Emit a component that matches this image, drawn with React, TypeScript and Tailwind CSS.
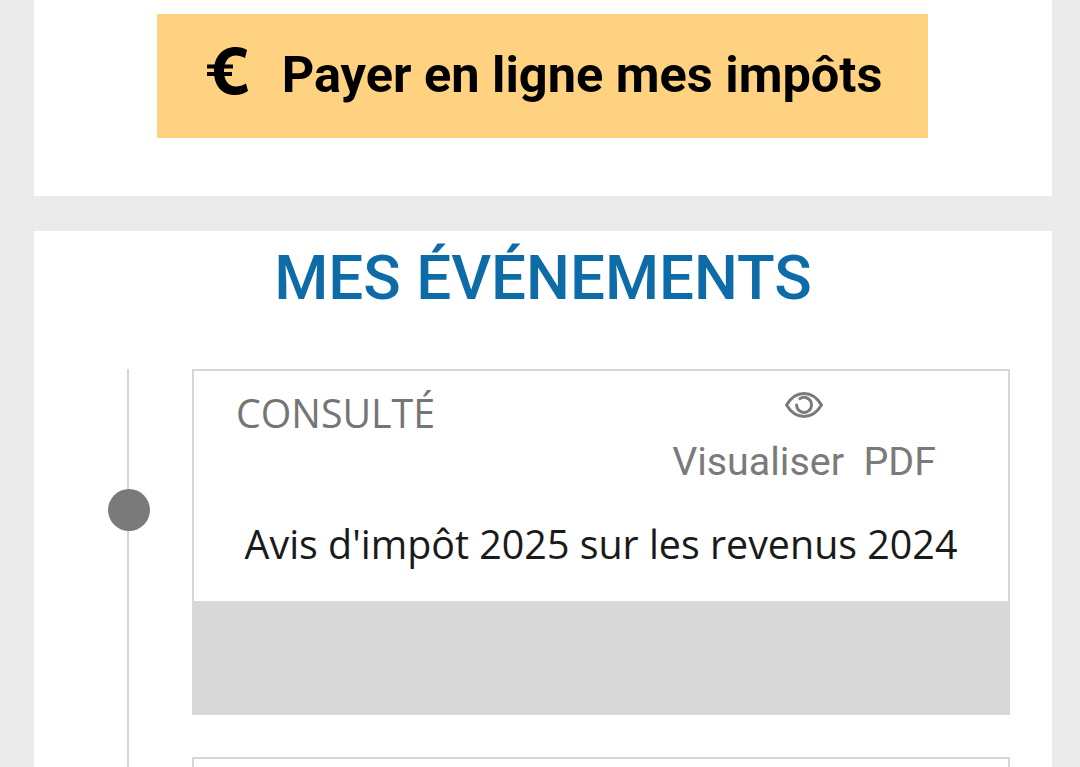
export default function App() {
  return (
    <div className="h-[767px] w-[1080px] overflow-hidden bg-[#ebebeb] pr-[28px] pl-[34px] font-['Roboto',sans-serif]">
      <section className="flex h-[196px] flex-col items-start bg-white pt-[14px] pl-[123px]">
        <a className="flex h-[124px] w-[771px] items-center justify-center gap-[33px] bg-[#fed280] pb-[2px] pl-[4px] text-black">
          <svg className="mb-[8px]" width="42" height="50" viewBox="0 -1 42 50" fill="currentColor">
            <path d="M40 3L38 11C35 9.500 32 8.500 29 8.500C21 8.500 17 15 17 24C17 33 21 39.500 29 39.500C32 39.500 36 38.500 39 36.500L41 44C37 46.500 33 48 28 48C14 48 7 38 7 24C7 10 15 0 29 0C33 0 37 1 40 3Z" />
            <path d="M0 17.500H26V21.500H0ZM0 25H25V29H0Z" />
          </svg>
          <span className="text-[50.5px] leading-none font-bold">Payer en ligne mes impôts</span>
        </a>
      </section>
      <section className="mt-[35px] bg-white pb-[40px]">
        <h2 className="pt-[11px] text-center text-[61.9px] leading-[72px] font-medium text-[#0d6ba8]">MES ÉVÉNEMENTS</h2>
        <div className="relative mt-[55px] ml-[93px] border-l-2 border-[#d6d6d6] pl-[63px]">
          <span className="absolute top-[120px] left-[-21px] h-[42px] w-[42px] rounded-full bg-[#7a7a7a]" />
          <article className="w-[818px] border-2 border-[#d6d6d6]">
            <div className="flex h-[230px] flex-col">
              <div className="flex justify-between pr-[72px] pl-[42px]">
                <span className="pt-[17px] font-['Open_Sans',sans-serif] text-[39.3px] leading-[50px] text-[#757575]">CONSULTÉ</span>
                <div className="flex flex-col items-center pt-[19px] text-[#7a7a7a]">
                  <svg width="38" height="30" viewBox="0 0 38 30" fill="none" stroke="currentColor" strokeWidth="3" strokeLinecap="round">
                    <path d="M1.500 15C6 7.500 12 3.500 19 3.500S32 7.500 36.500 15C32 22.500 26 26.500 19 26.500S6 22.500 1.500 15Z" />
                    <path d="M15 8.600A7.500 7.500 0 1 1 11.600 15" />
                  </svg>
                  <span className="mt-[17px] text-[39.4px] leading-[50px] whitespace-pre">Visualiser  PDF</span>
                </div>
              </div>
              <p className="mt-[31px] text-center font-['Open_Sans',sans-serif] text-[39.4px] leading-[52px] text-[#1a1a1a]">Avis d'impôt 2025 sur les revenus 2024</p>
            </div>
            <div className="-mx-[2px] -mb-[2px] h-[114px] bg-[#d8d8d8]" />
          </article>
          <article className="mt-[42px] h-[100px] w-[818px] border-2 border-[#d6d6d6]" />
        </div>
      </section>
    </div>
  );
}
